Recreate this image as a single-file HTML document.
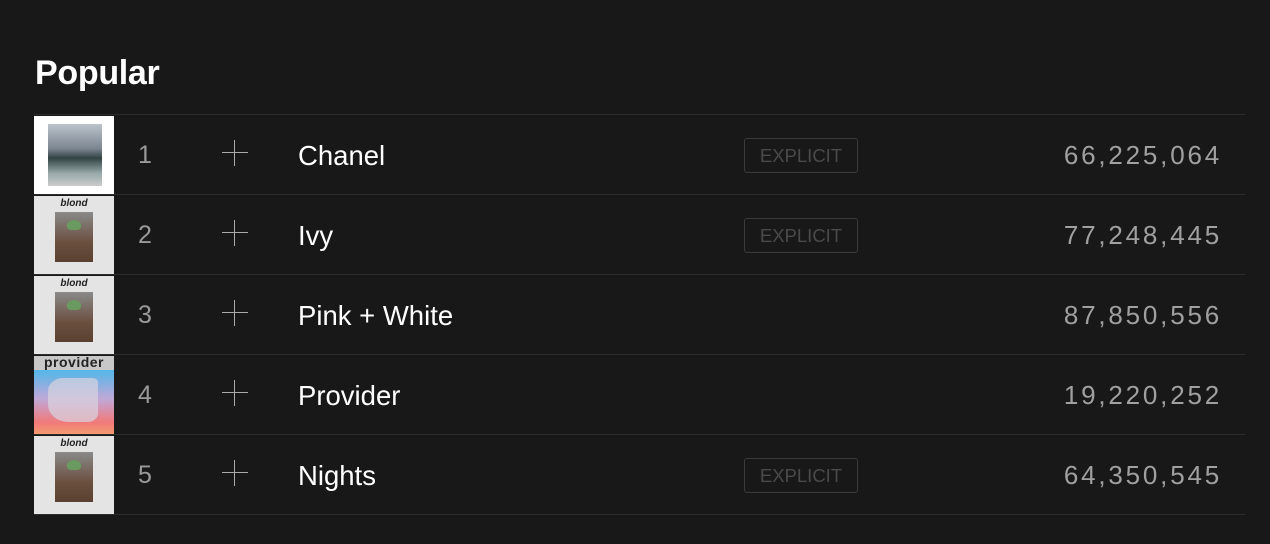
<!DOCTYPE html>
<html><head><style>
body{margin:0;background:#181818;width:1270px;height:544px;overflow:hidden;font-family:"Liberation Sans",sans-serif;}
h1{position:absolute;left:35px;top:54px;margin:0;font-size:34px;font-weight:bold;color:#fff;letter-spacing:-0.3px}
.row{position:absolute;left:34px;width:1211px;height:79px;border-bottom:1px solid #2c2c2c}
.top{position:absolute;left:34px;top:114px;width:1211px;height:1px;background:#2c2c2c}
.art{position:absolute;left:0;top:1px;width:80px;height:78px;overflow:hidden}
.num{position:absolute;left:104px;top:26px;font-size:25px;color:#9a9a9a}
.plus{position:absolute;left:188px;top:25px;width:26px;height:26px}
.plus:before{content:"";position:absolute;left:12px;top:0;width:1.2px;height:26px;background:#aaa}
.plus:after{content:"";position:absolute;left:0;top:12px;width:26px;height:1.2px;background:#aaa}
.title{position:absolute;left:264px;top:25px;font-size:27.5px;color:#fff}
.exp{position:absolute;left:710px;top:23px;width:114px;height:35px;border:1.5px solid #3a3a3a;border-radius:3px;box-sizing:border-box;color:#4a4a4a;font-size:18.5px;text-align:center;line-height:33px}
.plays{position:absolute;right:23px;top:25px;font-size:26px;color:#a0a0a0;letter-spacing:2.8px}
.blond{background:#e4e4e4}
.blond .b{position:absolute;left:0;width:80px;top:2px;text-align:center;font-size:10px;font-weight:bold;font-style:italic;color:#222}
.blond .p{position:absolute;left:21px;top:16px;width:38px;height:50px;background:linear-gradient(#8a8a8a,#6b5040 60%,#5a4030);}
.blond .p:before{content:"";position:absolute;left:12px;top:8px;width:14px;height:10px;border-radius:50% 50% 30% 30%;background:#6a9a60}
.chanel{background:#fff}
.chanel .p{position:absolute;left:14px;top:8px;width:54px;height:62px;background:linear-gradient(#bcc3cb,#7a8590 40%,#344 55%,#9aa 80%,#ccc)}
.prov{background:linear-gradient(#58b6e8 20%,#c0a8d8 55%,#f07a7a 85%,#f39a70)}
.prov .b{position:absolute;left:0;top:0;width:80px;height:14px;background:#c8c8c8;color:#222;font-size:14px;line-height:12px;font-weight:bold;text-align:center;letter-spacing:0.5px}
.prov .p{position:absolute;left:14px;top:22px;width:50px;height:44px;background:#d8d4e0;opacity:.7;border-radius:30% 10% 20% 40%}
</style></head><body>
<h1>Popular</h1>
<div class="top"></div>
<div class="row" style="top:115px"><div class="art chanel"><div class="p"></div></div><div class="num">1</div><div class="plus"></div><div class="title">Chanel</div><div class="exp">EXPLICIT</div><div class="plays">66,225,064</div></div>
<div class="row" style="top:195px"><div class="art blond"><div class="b">blond</div><div class="p"></div></div><div class="num">2</div><div class="plus"></div><div class="title">Ivy</div><div class="exp">EXPLICIT</div><div class="plays">77,248,445</div></div>
<div class="row" style="top:275px"><div class="art blond"><div class="b">blond</div><div class="p"></div></div><div class="num">3</div><div class="plus"></div><div class="title">Pink + White</div><div class="plays">87,850,556</div></div>
<div class="row" style="top:355px"><div class="art prov"><div class="b">provider</div><div class="p"></div></div><div class="num">4</div><div class="plus"></div><div class="title">Provider</div><div class="plays">19,220,252</div></div>
<div class="row" style="top:435px"><div class="art blond"><div class="b">blond</div><div class="p"></div></div><div class="num">5</div><div class="plus"></div><div class="title">Nights</div><div class="exp">EXPLICIT</div><div class="plays">64,350,545</div></div>
</body></html>
